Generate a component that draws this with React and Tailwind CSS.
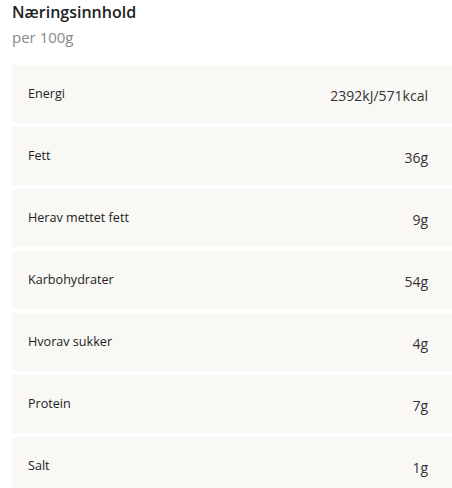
import React from 'react';

const rows = [
  { label: 'Energi', value: '2392kJ/571kcal' },
  { label: 'Fett', value: '36g' },
  { label: 'Herav mettet fett', value: '9g' },
  { label: 'Karbohydrater', value: '54g' },
  { label: 'Hvorav sukker', value: '4g' },
  { label: 'Protein', value: '7g' },
  { label: 'Salt', value: '1g' },
];

export default function App() {
  return (
    <div className="bg-white pl-3 font-['Open_Sans',sans-serif]">
      <h2 className="text-base leading-6 font-semibold text-[#222]">Næringsinnhold</h2>
      <p className="mt-px text-[15px] leading-6 text-[#888]">per 100g</p>

      {/* Nutrition table */}
      <div className="mt-[16px] flex flex-col gap-1">
        {rows.map((row) => (
          <div
            key={row.label}
            className="flex h-[58px] items-center justify-between bg-[#f9f8f5] pl-4 pr-6"
          >
            <span className="text-[12.6px] text-[#222]">{row.label}</span>
            <span className="pt-[3px] text-sm text-[#333]">{row.value}</span>
          </div>
        ))}
      </div>
    </div>
  );
}
